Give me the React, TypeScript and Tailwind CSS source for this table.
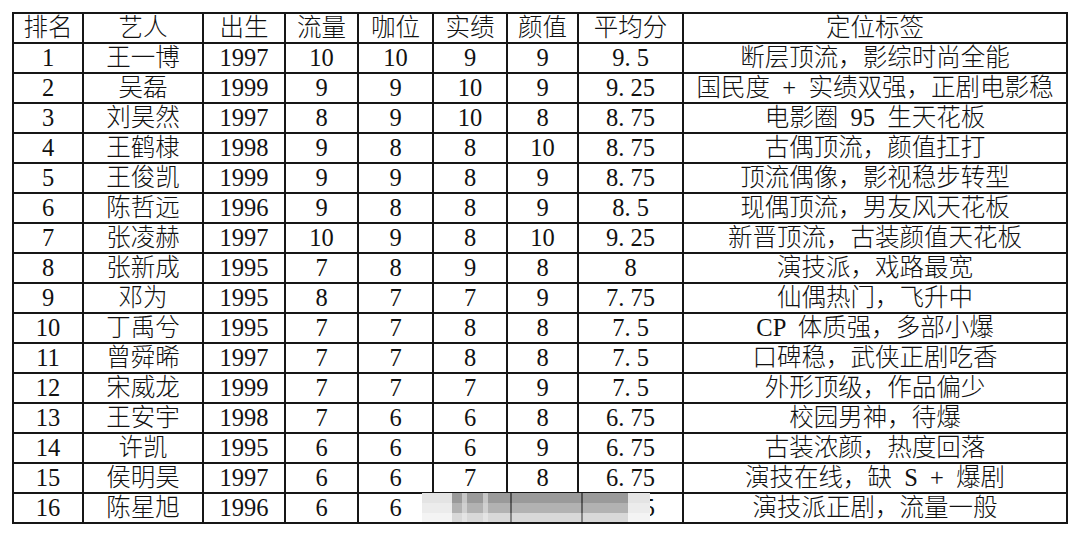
import React from "react";

const HEADERS = ["排名", "艺人", "出生", "流量", "咖位", "实绩", "颜值", "平均分", "定位标签"];

const ROWS: string[][] = [
  ["1", "王一博", "1997", "10", "10", "9", "9", "9.5", "断层顶流，影综时尚全能"],
  ["2", "吴磊", "1999", "9", "9", "10", "9", "9.25", "国民度 + 实绩双强，正剧电影稳"],
  ["3", "刘昊然", "1997", "8", "9", "10", "8", "8.75", "电影圈 95 生天花板"],
  ["4", "王鹤棣", "1998", "9", "8", "8", "10", "8.75", "古偶顶流，颜值扛打"],
  ["5", "王俊凯", "1999", "9", "9", "8", "9", "8.75", "顶流偶像，影视稳步转型"],
  ["6", "陈哲远", "1996", "9", "8", "8", "9", "8.5", "现偶顶流，男友风天花板"],
  ["7", "张凌赫", "1997", "10", "9", "8", "10", "9.25", "新晋顶流，古装颜值天花板"],
  ["8", "张新成", "1995", "7", "8", "9", "8", "8", "演技派，戏路最宽"],
  ["9", "邓为", "1995", "8", "7", "7", "9", "7.75", "仙偶热门，飞升中"],
  ["10", "丁禹兮", "1995", "7", "7", "8", "8", "7.5", "CP 体质强，多部小爆"],
  ["11", "曾舜晞", "1997", "7", "7", "8", "8", "7.5", "口碑稳，武侠正剧吃香"],
  ["12", "宋威龙", "1999", "7", "7", "7", "9", "7.5", "外形顶级，作品偏少"],
  ["13", "王安宇", "1998", "7", "6", "6", "8", "6.75", "校园男神，待爆"],
  ["14", "许凯", "1995", "6", "6", "6", "9", "6.75", "古装浓颜，热度回落"],
  ["15", "侯明昊", "1997", "6", "6", "7", "8", "6.75", "演技在线，缺 S + 爆剧"],
  ["16", "陈星旭", "1996", "6", "6", "7", "8", "6.75", "演技派正剧，流量一般"],
];

// SimSun-like numbers: the dot takes half an em, like the digits
function Cell({ text }: { text: string }) {
  if (/^\d+\.\d+$/.test(text)) {
    const [a, b] = text.split(".");
    return (
      <span>
        {a}
        <span className="inline-block w-[0.5em] text-left">.</span>
        {b}
      </span>
    );
  }
  return <span>{text}</span>;
}

const TONES = {
  light: ["bg-[#e4e4e4]", "bg-[#ececec]", "bg-[#f4f4f4]"],
  streak: ["bg-[#c6c6c6]", "bg-[#d0d0d0]", "bg-[#e4e4e4]"],
  mid: ["bg-[#9a9a9a]", "bg-[#b2b2b2]", "bg-[#d8d8d8]"],
  line: ["bg-[#505050]", "bg-[#626262]", "bg-[#858585]"],
};

// one vertical strip of the blurred watermark, darker at the top
function Strip({ w, tone }: { w: string; tone: keyof typeof TONES }) {
  const [a, b, c] = TONES[tone];
  return (
    <div className={`flex flex-col ${w}`}>
      <div className={`h-[10px] ${a}`} />
      <div className={`h-[10px] ${b}`} />
      <div className={`flex-1 ${c}`} />
    </div>
  );
}

// blurred weibo-style watermark lying over the last row
function Watermark() {
  return (
    <div className="absolute left-[422px] top-[493px] z-10 flex h-[29px] w-[228px]">
      <Strip w="w-[30px]" tone="light" />
      <Strip w="w-[10px]" tone="mid" />
      <Strip w="w-[5px]" tone="streak" />
      <Strip w="w-[16px]" tone="mid" />
      <Strip w="w-[5px]" tone="streak" />
      <Strip w="w-[22px]" tone="mid" />
      <Strip w="w-[2px]" tone="line" />
      <Strip w="w-[69px]" tone="mid" />
      <Strip w="w-[2px]" tone="line" />
      <Strip w="flex-1" tone="mid" />
      <Strip w="w-[22px]" tone="light" />
    </div>
  );
}

export default function App() {
  return (
    <div className="relative h-[536px] w-[1080px] overflow-hidden bg-white pl-[12px] pt-[12px]">
      <div
        className="grid w-[1056px] grid-cols-[68px_118px_80px_71px_73px_72px_69px_103px_382px] auto-rows-[28px] gap-[2px] border-2 border-[#161616] bg-[#161616] text-[24.5px] leading-none text-[#111] [word-spacing:0.25em]"
        style={{ fontFamily: '"Liberation Serif", "Noto Sans CJK SC", serif' }}
      >
        {HEADERS.map((h) => (
          <div key={h} className="flex items-center justify-center bg-white font-light">
            {h}
          </div>
        ))}
        {ROWS.map((row) =>
          row.map((v, i) => (
            <div
              key={row[0] + "-" + i}
              className="flex items-center justify-center whitespace-nowrap bg-white pt-[1px] font-light"
            >
              <Cell text={v} />
            </div>
          ))
        )}
      </div>
      <Watermark />
    </div>
  );
}
